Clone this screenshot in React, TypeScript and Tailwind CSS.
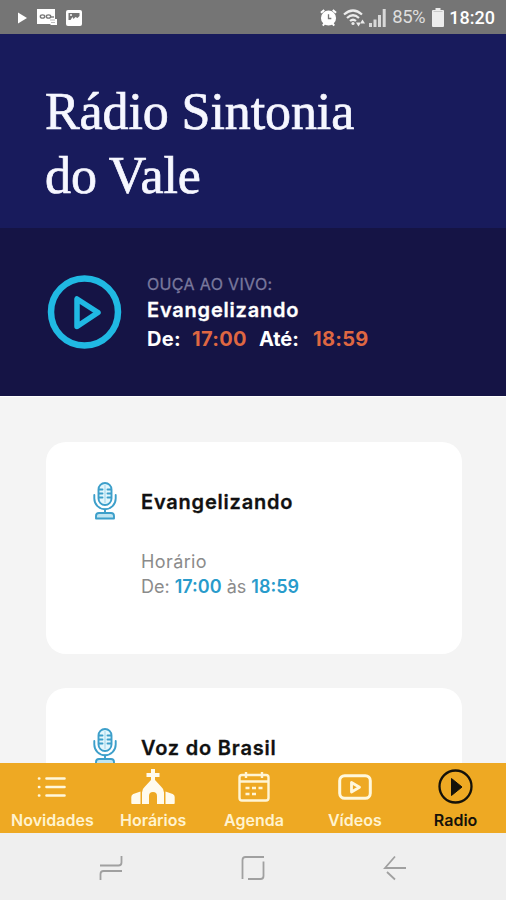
import React from 'react'

interface Program {
  name:      string
  schedule?: { start: string; end: string }
}

const programs: Program[] = [
  { name: 'Evangelizando', schedule: { start: '17:00', end: '18:59' } },
  { name: 'Voz do Brasil' },
]

function StatusBar() {
  return (
    <div className="flex h-[34px] shrink-0 items-center justify-between bg-[#757575] pl-[17px] pr-[11px] pt-px">
      <div className="flex items-center gap-[9px]">
        <svg width="11" height="12" viewBox="0 0 11 12" fill="#fff">
          <path d="M1 0.5 10 6 1 11.5z" />
        </svg>
        <svg width="20" height="17" viewBox="0 0 20 17" fill="none">
          <path d="M0 0h18v10h2v6h-6l-1-1H0z" fill="#fff" />
          <ellipse cx="5.5" cy="7.5" rx="2.2" ry="1.6" stroke="#777" strokeWidth="1.4" />
          <ellipse cx="11.5" cy="7.5" rx="2.2" ry="1.6" stroke="#777" strokeWidth="1.4" />
          <path d="M14 8h3" stroke="#777" strokeWidth="1.4" />
          <path d="M13 11h5M14 13.500h4" stroke="#bbb" />
        </svg>
        <svg width="16" height="16" viewBox="0 0 16 16">
          <rect width="16" height="16" rx="2" fill="#fff" />
          <path d="M2.5 3h11v3l-2 2-2-1-2 2-1-2-2 3h-2z" fill="#757575" />
          <circle cx="5" cy="5" r="1" fill="#fff" />
        </svg>
      </div>
      <div className="flex items-center">
        <svg width="17" height="18" viewBox="0 0 18 19" className="mr-[6px]">
          <path d="M1 4 4.5 1M17 4 13.500 1M3 17.500 5 15M15 17.500 13 15" stroke="#fff" strokeWidth="2.200" />
          <circle cx="9" cy="9.500" r="8" fill="#fff" />
          <path d="M9 5.500v4.500h3" stroke="#757575" strokeWidth="1.400" fill="none" />
        </svg>
        <svg width="23" height="18" viewBox="0 0 23 18" fill="none" stroke="#ececec" strokeWidth="2.200" className="mr-[3px]">
          <path d="M1 5.500Q10 -2.500 19 5.500M4 9Q10 3.500 16 9M7 12Q10 9.500 13 12" />
          <circle cx="10" cy="14.500" r="1.600" fill="#ececec" stroke="none" />
          <path d="M13 13.500h5l-2.500 4zM17 14.500h5l-2.500-4z" fill="#ececec" stroke="none" />
        </svg>
        <svg width="17" height="18" viewBox="0 0 17 18" fill="#d8d8d8" className="mr-[6px]">
          <path d="M0 14h3v4H0zM4.500 10.500h3V18h-3zM9 6h3v12H9zM13.700 0h3v18h-3z" />
        </svg>
        <span className="mr-[6px] w-[34px] whitespace-nowrap font-['Roboto'] text-[18.5px] tracking-[-0.5px] text-[#dedede]">85%</span>
        <svg width="12" height="19" viewBox="0 0 12 19" className="mr-[5px]">
          <path d="M3.500 0h5v2H11a1 1 0 0 1 1 1v15a1 1 0 0 1-1 1H1a1 1 0 0 1-1-1V3a1 1 0 0 1 1-1h2.500z" fill="#ececec" />
          <path d="M1.500 3.500h9" stroke="#c8c8c8" />
        </svg>
        <span className="font-['Roboto'] text-[18px] font-medium text-white">18:20</span>
      </div>
    </div>
  )
}

function MicIcon() {
  return (
    <svg width="24" height="38" viewBox="0 0 24 38" fill="none" stroke="#3d9fca" strokeWidth="1.9" strokeLinecap="round" className="shrink-0">
      <rect x="5.500" y="1" width="13" height="22" rx="6.500" fill="#e4f6fc" />
      <path d="M6 7.500h3.500M14.500 7.500h3.500M6 11.500h3.500M14.500 11.500h3.500M6 15.500h3.500M14.500 15.500h3.500" />
      <path d="M12 3.500v17" stroke="#a9daec" strokeWidth="1.200" />
      <path d="M1.300 13v3.500a10.700 10.700 0 0 0 21.400 0V13" />
      <path d="M12 27.500V31" />
      <path d="M6 31h12q3 0 3 3v2.500H3V34q0-3 3-3z" strokeLinejoin="round" fill="#bfe5f2" />
    </svg>
  )
}

function ProgramCard({ program }: { program: Program }) {
  return (
    <div className="flex h-[212px] shrink-0 gap-[24px] rounded-[20px] bg-white pl-[47px] pt-[40px]">
      <MicIcon />
      <div>
        <h2 className="mt-[6px] text-[20px] font-semibold leading-[28px] tracking-[0.8px] text-[#111] [-webkit-text-stroke:0.3px_#111]">
          {program.name}
        </h2>
        {program.schedule && (
          <div className="mt-[33px] text-[18px] leading-[25px] text-[#8b8b8b]">
            <p className="tracking-[0.4px]">Horário</p>
            <p>
              De: <b className="font-semibold text-[#289bcb]">{program.schedule.start}</b> às{' '}
              <b className="font-semibold text-[#289bcb]">{program.schedule.end}</b>
            </p>
          </div>
        )}
      </div>
    </div>
  )
}

function ListIcon() {
  return (
    <svg width="30" height="22" viewBox="0 0 30 22" stroke="#fff8dc" strokeWidth="2.6" strokeLinecap="round">
      <path d="M9.500 2.500h18M9.500 11h18M9.500 19.500h18M2 2.500h.3M2 11h.3M2 19.500h.3" />
    </svg>
  )
}

function ChurchIcon() {
  return (
    <svg width="44" height="36" viewBox="0 0 44 36" fill="#fffbed">
      <path d="M20 0h4v4h4.500v4H24v3l6 6.500q3 2.500 3 6V35h-7v-8a4 4 0 0 0-8 0v8h-7V23.500q0-3.500 3-6L20 11V8h-4.500V4H20z" />
      <path d="M9.500 22.500V35H1q-.7 0-.7-1v-6q0-2 2-3zM34.500 22.500V35H43q.7 0 .7-1v-6q0-2-2-3z" />
    </svg>
  )
}

function CalendarIcon() {
  return (
    <svg width="32" height="32" viewBox="0 0 32 32" fill="none" stroke="#fff5d5" strokeWidth="2.400">
      <rect x="1.500" y="4" width="29" height="25.500" rx="2.500" />
      <path d="M1.500 10.500h29M8 1v6M24 1v6" />
      <path d="M7.500 17h4M14 17h4M20.500 17h4M7.500 23h4M14 23h4" strokeWidth="2.600" />
    </svg>
  )
}

function VideoIcon() {
  return (
    <svg width="34" height="26" viewBox="0 0 34 26" fill="none" stroke="#fff8dc" strokeWidth="3" strokeLinejoin="round">
      <rect x="1.700" y="1.700" width="30.600" height="22.600" rx="5" />
      <path d="M13.500 8.500v9.500l8-4.700z" strokeWidth="2.800" />
    </svg>
  )
}

function RadioIcon() {
  return (
    <svg width="35" height="35" viewBox="0 0 35 35">
      <circle cx="17.500" cy="17.500" r="16" fill="none" stroke="#15120a" strokeWidth="2.300" />
      <path d="M13.500 9.500v17L24 18z" fill="#15120a" stroke="#15120a" strokeLinejoin="round" />
    </svg>
  )
}

const tabs = [
  { label: 'Novidades', icon: <ListIcon />,     active: false },
  { label: 'Horários',  icon: <ChurchIcon />,   active: false },
  { label: 'Agenda',    icon: <CalendarIcon />, active: false },
  { label: 'Vídeos',    icon: <VideoIcon />,    active: false },
  { label: 'Radio',     icon: <RadioIcon />,    active: true },
]

export default function App() {
  return (
    <div className="flex h-[900px] w-[506px] flex-col overflow-hidden bg-[#f4f4f4] font-['Inter',sans-serif]">
      <StatusBar />

      {/* Station name */}
      <header className="h-[194px] shrink-0 bg-[#181b5c] pl-[45px] pt-[46px]">
        <h1 className="font-['Liberation_Serif',serif] text-[52px] leading-[64px] tracking-[-0.1px] text-[#f6f7ff] [-webkit-text-stroke:0.7px_#f6f7ff]">
          Rádio Sintonia
          <br />
          do Vale
        </h1>
      </header>

      {/* Live player */}
      <section className="flex h-[168px] shrink-0 bg-[#151445] pl-[47px] pt-[46px]">
        <svg width="75" height="76" viewBox="0 0 75 76" fill="none" stroke="#20b9e3" strokeLinejoin="round">
          <circle cx="37.500" cy="38" r="33.500" strokeWidth="6.500" />
          <path d="M30 25v27.500L51 38.500z" strokeWidth="5.500" />
        </svg>
        <div className="ml-[25px] mt-[-1px] font-semibold text-white">
          <p className="text-[16px] font-normal leading-[22px] tracking-[0.35px] text-[#7a799d] [-webkit-text-stroke:0.3px_#7a799d]">
            OUÇA AO VIVO:
          </p>
          <p className="mt-px text-[20px] leading-[28px] tracking-[0.8px] [-webkit-text-stroke:0.3px_#fff]">Evangelizando</p>
          <p className="flex text-[20px] font-bold leading-[30px] tracking-[0.3px]">
            <span className="w-[45px]">De:</span>
            <span className="w-[67px] text-[#de6742]">17:00</span>
            <span className="w-[54px] tracking-[-0.1px]">Até:</span>
            <span className="text-[#de6742]">18:59</span>
          </p>
        </div>
      </section>

      {/* Schedule */}
      <main className="flex min-h-0 flex-1 flex-col gap-[34px] overflow-hidden border-t border-[#fff] pl-[46px] pr-[44px] pt-[45px]">
        {programs.map(p => (
          <ProgramCard key={p.name} program={p} />
        ))}
      </main>

      <nav className="grid h-[70px] shrink-0 grid-cols-5 bg-[#eea923] pl-[2px]">
        {tabs.map(tab => (
          <div
            key={tab.label}
            className={`flex flex-col items-center ${tab.active ? 'text-[#15120a]' : 'text-[#fff3cf]'}`}
          >
            <div className="flex h-[47px] items-center">{tab.icon}</div>
            <span className="text-[16px] font-semibold leading-[21px]">{tab.label}</span>
          </div>
        ))}
      </nav>

      {/* Android navigation keys */}
      <footer className="flex h-[67px] shrink-0 items-center justify-between bg-[#efefef] pl-[99px] pr-[99px] pt-[2px]">
        <svg width="24" height="26" viewBox="0 0 24 26" fill="none" stroke="#a0a0a0" strokeWidth="1.800">
          <path d="M1 10.500h18.500q3 0 3-3V1M23 16H4.500q-3 0-3 3v6" />
        </svg>
        <svg width="24" height="26" viewBox="0 0 24 26" fill="none" stroke="#a0a0a0" strokeWidth="1.800">
          <path d="M1.500 24V5q0-3 3-3H23M22.500 6.500V21q0 3-3 3H7" />
        </svg>
        <svg width="24" height="26" viewBox="0 0 24 26" fill="none" stroke="#a0a0a0" strokeWidth="1.800">
          <path d="M23 13H2L12 1.500M4 17l8 7.500" />
        </svg>
      </footer>
    </div>
  )
}
